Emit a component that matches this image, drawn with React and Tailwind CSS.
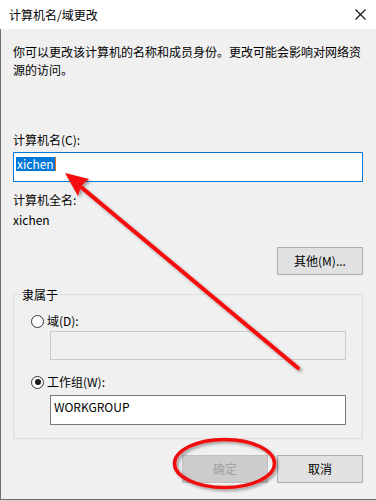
import React from "react";

function Radio({ checked }) {
  return (
    <span className="w-[13px] h-[13px] rounded-full border border-[#333333] bg-white flex items-center justify-center shrink-0">
      {checked ? <span className="w-[6px] h-[6px] rounded-full bg-[#1a1a1a]" /> : null}
    </span>
  );
}

export default function App() {
  return (
    <div className="relative w-[376px] h-[501px] overflow-hidden bg-[#d4d4d4] text-[12px] text-black font-['Microsoft_YaHei','Noto_Sans_CJK_SC','Noto_Sans',sans-serif]">
      {/* Title bar */}
      <div className="h-[29px] bg-white flex items-center justify-between pl-[9px] pr-[9px]">
        <span className="leading-[16px]">计算机名/域更改</span>
        <svg width="11" height="11" viewBox="0 0 11 11" className="mr-[1px]">
          <path d="M0.5 0.5 L10.5 10.5 M10.5 0.5 L0.5 10.5" stroke="#111" strokeWidth="1.1" fill="none" />
        </svg>
      </div>

      {/* Body */}
      <div className="h-[471px] bg-[#f0f0f0] border-l border-b border-[#6e6e6e] pl-[12px] pr-[13px] pt-[14px] flex flex-col">
        <p className="leading-[18px] w-[350px]">
          你可以更改该计算机的名称和成员身份。更改可能会影响对网络资源的访问。
        </p>

        <div className="mt-[53px] leading-[16px]">计算机名(C):</div>
        <div className="mt-[4px] h-[30px] border border-[#0078d7] bg-white pl-[2px] pt-[2px]">
          <span className="inline-block h-[14px] leading-[14px] bg-[#0078d7] text-white px-[1px] border-r border-[#e07020]">xichen</span>
        </div>

        <div className="mt-[10px] leading-[16px]">计算机全名:</div>
        <div className="mt-[4px] leading-[16px]">xichen</div>

        <div className="mt-[19px] flex justify-end">
          <button className="w-[86px] h-[28px] bg-[#e1e1e1] border border-[#adadad] leading-[16px]">其他(M)...</button>
        </div>

        <div className="relative mt-[19px] h-[145px] border border-[#dcdcdc] pl-[17px] pt-[18px] flex flex-col">
          <span className="absolute -top-[8px] left-[7px] px-[1px] bg-[#f0f0f0] leading-[16px]">隶属于</span>
          <div className="flex items-center gap-[3px] h-[16px]">
            <Radio checked={false} />
            <span className="leading-[16px]">域(D):</span>
          </div>
          <div className="mt-[2px] ml-[19px] w-[296px] h-[29px] border border-[#cccccc] bg-[#f0f0f0]" />
          <div className="mt-[14px] flex items-center gap-[3px] h-[16px]">
            <Radio checked={true} />
            <span className="leading-[16px]">工作组(W):</span>
          </div>
          <div className="mt-[5px] ml-[19px] w-[296px] h-[30px] border border-[#7a7a7a] bg-white pl-[3px] pt-[2px] leading-[18px]">
            WORKGROUP
          </div>
        </div>

        <div className="mt-[16px] flex justify-end gap-[9px]">
          <button className="w-[86px] h-[28px] bg-[#cccccc] border border-[#bfbfbf] text-[#a0a0a0] leading-[16px]">确定</button>
          <button className="w-[86px] h-[28px] bg-[#e1e1e1] border border-[#adadad] leading-[16px]">取消</button>
        </div>
      </div>

      {/* Annotations */}
      <svg className="absolute inset-0 pointer-events-none" width="376" height="501" viewBox="0 0 376 501">
        <defs>
          <filter id="sh" x="-20%" y="-20%" width="140%" height="140%">
            <feDropShadow dx="2" dy="2" stdDeviation="1.5" floodColor="#000" floodOpacity="0.35" />
          </filter>
        </defs>
        <g filter="url(#sh)">
          <line x1="298" y1="368" x2="81" y2="187" stroke="#f50a0a" strokeWidth="4" strokeLinecap="round" />
          <polygon points="65,173 89,179 81,186 78,196" fill="#f50a0a" />
          <ellipse cx="224.5" cy="463.5" rx="50" ry="24" fill="none" stroke="#f00a0a" strokeWidth="3.5" />
        </g>
      </svg>
    </div>
  );
}
